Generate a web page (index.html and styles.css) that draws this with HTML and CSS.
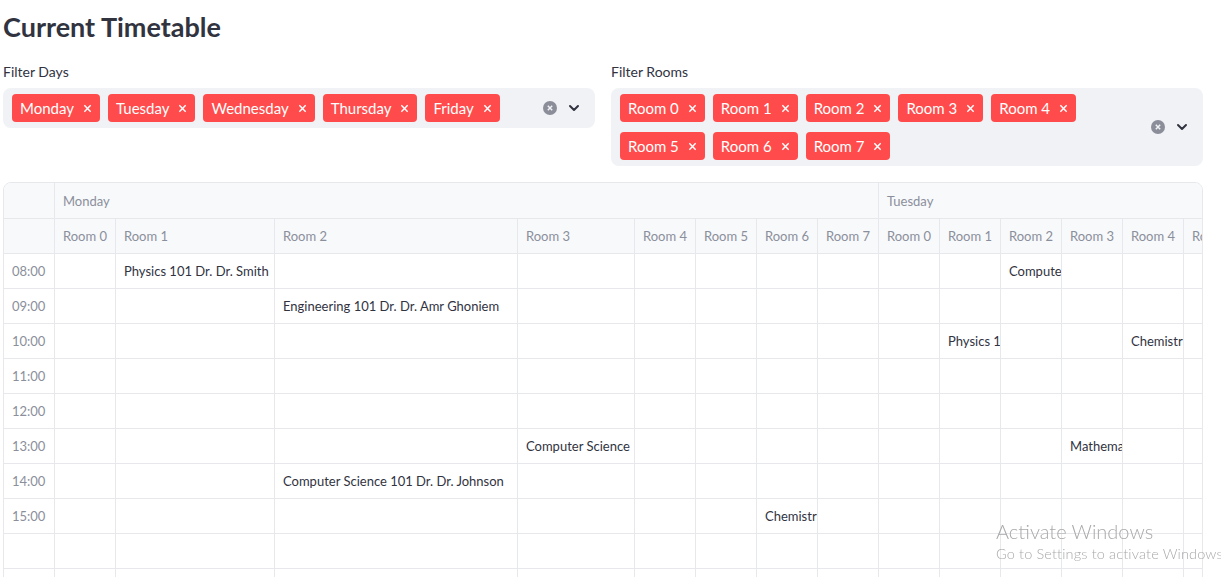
FILE: index.html
```html
<!DOCTYPE html>
<html lang="en">
<head>
<meta charset="utf-8">
<title>Current Timetable</title>
<link rel="stylesheet" href="styles.css">
</head>
<body>
<div class="page">
  <h1 class="title">Current Timetable</h1>
  <div class="filters">
    <div class="filter">
      <div class="label">Filter Days</div>
      <div class="select">
        <div class="tags">
          <span class="tag">Monday<svg class="x" viewBox="0 0 10 10"><path d="M1.5 1.5 8.5 8.5M8.5 1.5 1.5 8.5"/></svg></span>
          <span class="tag">Tuesday<svg class="x" viewBox="0 0 10 10"><path d="M1.5 1.5 8.5 8.5M8.5 1.5 1.5 8.5"/></svg></span>
          <span class="tag">Wednesday<svg class="x" viewBox="0 0 10 10"><path d="M1.5 1.5 8.5 8.5M8.5 1.5 1.5 8.5"/></svg></span>
          <span class="tag">Thursday<svg class="x" viewBox="0 0 10 10"><path d="M1.5 1.5 8.5 8.5M8.5 1.5 1.5 8.5"/></svg></span>
          <span class="tag">Friday<svg class="x" viewBox="0 0 10 10"><path d="M1.5 1.5 8.5 8.5M8.5 1.5 1.5 8.5"/></svg></span>
        </div>
        <div class="icons">
          <svg class="clear" viewBox="0 0 14 14"><circle cx="7" cy="7" r="7"/><path d="M4.8 4.8 9.2 9.2M9.2 4.8 4.8 9.2"/></svg>
          <svg class="chev" viewBox="0 0 12 12"><path d="M2 4 6 8 10 4"/></svg>
        </div>
      </div>
    </div>
    <div class="filter">
      <div class="label">Filter Rooms</div>
      <div class="select">
        <div class="tags">
          <span class="tag">Room 0<svg class="x" viewBox="0 0 10 10"><path d="M1.5 1.5 8.5 8.5M8.5 1.5 1.5 8.5"/></svg></span>
          <span class="tag">Room 1<svg class="x" viewBox="0 0 10 10"><path d="M1.5 1.5 8.5 8.5M8.5 1.5 1.5 8.5"/></svg></span>
          <span class="tag">Room 2<svg class="x" viewBox="0 0 10 10"><path d="M1.5 1.5 8.5 8.5M8.5 1.5 1.5 8.5"/></svg></span>
          <span class="tag">Room 3<svg class="x" viewBox="0 0 10 10"><path d="M1.5 1.5 8.5 8.5M8.5 1.5 1.5 8.5"/></svg></span>
          <span class="tag">Room 4<svg class="x" viewBox="0 0 10 10"><path d="M1.5 1.5 8.5 8.5M8.5 1.5 1.5 8.5"/></svg></span>
          <span class="tag">Room 5<svg class="x" viewBox="0 0 10 10"><path d="M1.5 1.5 8.5 8.5M8.5 1.5 1.5 8.5"/></svg></span>
          <span class="tag">Room 6<svg class="x" viewBox="0 0 10 10"><path d="M1.5 1.5 8.5 8.5M8.5 1.5 1.5 8.5"/></svg></span>
          <span class="tag">Room 7<svg class="x" viewBox="0 0 10 10"><path d="M1.5 1.5 8.5 8.5M8.5 1.5 1.5 8.5"/></svg></span>
        </div>
        <div class="icons">
          <svg class="clear" viewBox="0 0 14 14"><circle cx="7" cy="7" r="7"/><path d="M4.8 4.8 9.2 9.2M9.2 4.8 4.8 9.2"/></svg>
          <svg class="chev" viewBox="0 0 12 12"><path d="M2 4 6 8 10 4"/></svg>
        </div>
      </div>
    </div>
  </div>

  <div class="grid-wrap">
    <div class="grid">
      <div class="c h"></div>
      <div class="c h span8">Monday</div>
      <div class="c h span8">Tuesday</div>

      <div class="c h"></div>
      <div class="c h">Room 0</div><div class="c h">Room 1</div><div class="c h">Room 2</div><div class="c h">Room 3</div>
      <div class="c h">Room 4</div><div class="c h">Room 5</div><div class="c h">Room 6</div><div class="c h">Room 7</div>
      <div class="c h">Room 0</div><div class="c h">Room 1</div><div class="c h">Room 2</div><div class="c h">Room 3</div>
      <div class="c h">Room 4</div><div class="c h">Room 5</div><div class="c h">Room 6</div><div class="c h">Room 7</div>

      <div class="c i">08:00</div>
      <div class="c"></div><div class="c">Physics 101 Dr. Dr. Smith</div><div class="c"></div><div class="c"></div>
      <div class="c"></div><div class="c"></div><div class="c"></div><div class="c"></div>
      <div class="c"></div><div class="c"></div><div class="c">Computer Science 101 Dr. Dr. Johnson</div><div class="c"></div>
      <div class="c"></div><div class="c"></div><div class="c"></div><div class="c"></div>

      <div class="c i">09:00</div>
      <div class="c"></div><div class="c"></div><div class="c">Engineering 101 Dr. Dr. Amr Ghoniem</div><div class="c"></div>
      <div class="c"></div><div class="c"></div><div class="c"></div><div class="c"></div>
      <div class="c"></div><div class="c"></div><div class="c"></div><div class="c"></div>
      <div class="c"></div><div class="c"></div><div class="c"></div><div class="c"></div>

      <div class="c i">10:00</div>
      <div class="c"></div><div class="c"></div><div class="c"></div><div class="c"></div>
      <div class="c"></div><div class="c"></div><div class="c"></div><div class="c"></div>
      <div class="c"></div><div class="c">Physics 101 Dr. Dr. Smith</div><div class="c"></div><div class="c"></div>
      <div class="c">Chemistry 101 Dr. Dr. Brown</div><div class="c"></div><div class="c"></div><div class="c"></div>

      <div class="c i">11:00</div>
      <div class="c"></div><div class="c"></div><div class="c"></div><div class="c"></div>
      <div class="c"></div><div class="c"></div><div class="c"></div><div class="c"></div>
      <div class="c"></div><div class="c"></div><div class="c"></div><div class="c"></div>
      <div class="c"></div><div class="c"></div><div class="c"></div><div class="c"></div>

      <div class="c i">12:00</div>
      <div class="c"></div><div class="c"></div><div class="c"></div><div class="c"></div>
      <div class="c"></div><div class="c"></div><div class="c"></div><div class="c"></div>
      <div class="c"></div><div class="c"></div><div class="c"></div><div class="c"></div>
      <div class="c"></div><div class="c"></div><div class="c"></div><div class="c"></div>

      <div class="c i">13:00</div>
      <div class="c"></div><div class="c"></div><div class="c"></div><div class="c">Computer Science 101 Dr. Dr. Johnson</div>
      <div class="c"></div><div class="c"></div><div class="c"></div><div class="c"></div>
      <div class="c"></div><div class="c"></div><div class="c"></div><div class="c">Mathematics 101 Dr. Dr. Lee</div>
      <div class="c"></div><div class="c"></div><div class="c"></div><div class="c"></div>

      <div class="c i">14:00</div>
      <div class="c"></div><div class="c"></div><div class="c">Computer Science 101 Dr. Dr. Johnson</div><div class="c"></div>
      <div class="c"></div><div class="c"></div><div class="c"></div><div class="c"></div>
      <div class="c"></div><div class="c"></div><div class="c"></div><div class="c"></div>
      <div class="c"></div><div class="c"></div><div class="c"></div><div class="c"></div>

      <div class="c i">15:00</div>
      <div class="c"></div><div class="c"></div><div class="c"></div><div class="c"></div>
      <div class="c"></div><div class="c"></div><div class="c">Chemistry 101 Dr. Dr. Brown</div><div class="c"></div>
      <div class="c"></div><div class="c"></div><div class="c"></div><div class="c"></div>
      <div class="c"></div><div class="c"></div><div class="c"></div><div class="c"></div>

      <div class="c i"></div>
      <div class="c"></div><div class="c"></div><div class="c"></div><div class="c"></div>
      <div class="c"></div><div class="c"></div><div class="c"></div><div class="c"></div>
      <div class="c"></div><div class="c"></div><div class="c"></div><div class="c"></div>
      <div class="c"></div><div class="c"></div><div class="c"></div><div class="c"></div>

      <div class="c i"></div>
      <div class="c"></div><div class="c"></div><div class="c"></div><div class="c"></div>
      <div class="c"></div><div class="c"></div><div class="c"></div><div class="c"></div>
      <div class="c"></div><div class="c"></div><div class="c"></div><div class="c"></div>
      <div class="c"></div><div class="c"></div><div class="c"></div><div class="c"></div>
    </div>
  </div>
</div>

<div class="watermark">
  <div class="wm1">Activate Windows</div>
  <div class="wm2">Go to Settings to activate Windows.</div>
</div>
</body>
</html>
```

FILE: styles.css
```css
html, body {
  margin: 0;
  padding: 0;
  overflow: hidden;
  background: #ffffff;
}

body {
  font-family: Lato, "Noto Sans", sans-serif;
  color: #31333f;
}

.page {
  width: 1200px;
  padding-left: 3px;
}

.title {
  margin: 0 0 19px 0;
  padding-top: 11px;
  font-size: 27px;
  line-height: 32px;
  font-weight: 700;
  color: #31333f;
}

.filters {
  display: flex;
  gap: 16px;
  align-items: flex-start;
}

.filter {
  flex: 1 1 0;
  min-width: 0;
}

.label {
  font-size: 14px;
  line-height: 20px;
  margin-bottom: 6px;
}

.select {
  display: flex;
  background: #f0f2f6;
  border-radius: 8px;
  min-height: 40px;
  box-sizing: border-box;
}

.tags {
  flex: 1 1 auto;
  display: flex;
  flex-wrap: wrap;
  gap: 10px 8px;
  padding: 6px 0 6px 9px;
}

.tag {
  display: inline-flex;
  align-items: center;
  height: 28px;
  padding: 1px 8px 0 8px;
  background: #ff4b4b;
  color: #ffffff;
  border-radius: 4px;
  font-size: 15px;
  line-height: 27px;
  box-sizing: border-box;
}

.tag .x {
  width: 9px;
  height: 9px;
  margin-left: 9px;
  fill: none;
  stroke: #ffffff;
  stroke-width: 1.6;
}

.icons {
  display: flex;
  align-items: center;
  gap: 11px;
  padding-right: 15px;
  align-self: center;
}

.clear {
  width: 14px;
  height: 14px;
}

.clear circle {
  fill: #8b8d99;
}

.clear path {
  stroke: #f0f2f6;
  stroke-width: 1.5;
  fill: none;
}

.chev {
  width: 12px;
  height: 12px;
  fill: none;
  stroke: #31333f;
  stroke-width: 2;
  stroke-linecap: round;
  stroke-linejoin: round;
}

.grid-wrap {
  margin-top: 16px;
  width: 1200px;
  box-sizing: border-box;
  border: 1px solid #e6e8ec;
  border-radius: 8px;
  overflow: hidden;
}

.grid {
  display: grid;
  grid-template-columns: 51px 61px 159px 243px 117px 61px 61px 61px 61px repeat(8, 61px);
  grid-auto-rows: 35px;
  grid-template-rows: 36px;
  width: max-content;
}

.c {
  box-sizing: border-box;
  border-right: 1px solid #e6e8ec;
  border-bottom: 1px solid #e6e8ec;
  padding: 0 8px;
  display: flex;
  align-items: center;
  font-size: 13px;
  white-space: nowrap;
  overflow: hidden;
  color: #31333f;
  background: #ffffff;
}

.h {
  background: #f8f9fb;
  color: #8b8f9b;
}

.i {
  color: #8b8f9b;
}

.span8 {
  grid-column: span 8;
}

.watermark {
  position: fixed;
  left: 996px;
  top: 518px;
  color: #a9a9a9;
  font-family: Lato, "Noto Sans", sans-serif;
  font-weight: 300;
  white-space: nowrap;
  pointer-events: none;
}

.wm1 {
  font-size: 20px;
  line-height: 26px;
}

.wm2 {
  font-size: 14.5px;
  line-height: 20px;
  letter-spacing: 0.15px;
}
```
